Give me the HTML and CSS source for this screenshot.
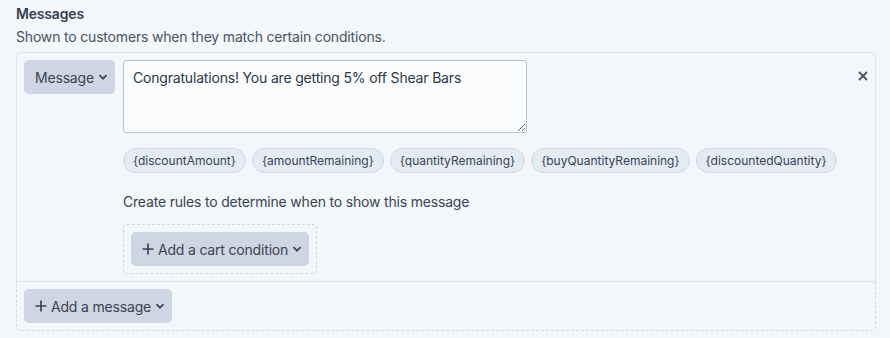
FILE: index.html
```html
<!DOCTYPE html>
<html lang="en">
<head>
    <meta charset="UTF-8">
    <meta name="viewport" content="width=device-width, initial-scale=1.0">
    <title>Messages</title>
    <link rel="stylesheet" href="styles.css">
</head>
<body>
    <div class="section">
        <div class="section-title">Messages</div>
        <div class="section-desc">Shown to customers when they match certain conditions.</div>

        <div class="messages">
            <!-- Mensaje -->
            <div class="message-item">
                <button class="btn">Message
                    <svg class="chevron" viewBox="0 0 10 10"><path d="M1.5 3.2 L5 6.7 L8.5 3.2" /></svg>
                </button>
                <div class="message-body">
                    <textarea class="message-text">Congratulations! You are getting 5% off Shear Bars</textarea>
                    <div class="tags">
                        <span class="tag">{discountAmount}</span>
                        <span class="tag">{amountRemaining}</span>
                        <span class="tag">{quantityRemaining}</span>
                        <span class="tag">{buyQuantityRemaining}</span>
                        <span class="tag">{discountedQuantity}</span>
                    </div>
                    <div class="rules-label">Create rules to determine when to show this message</div>
                    <div class="conditions">
                        <button class="btn">
                            <svg class="plus" viewBox="0 0 12 12"><path d="M6 0.5 V11.5 M0.5 6 H11.5" /></svg>
                            Add a cart condition
                            <svg class="chevron" viewBox="0 0 10 10"><path d="M1.5 3.2 L5 6.7 L8.5 3.2" /></svg>
                        </button>
                    </div>
                </div>
                <button class="remove" title="Remove">
                    <svg viewBox="0 0 10 10"><path d="M1 1 L9 9 M9 1 L1 9" /></svg>
                </button>
            </div>

            <!-- Agregar -->
            <div class="messages-footer">
                <button class="btn">
                    <svg class="plus" viewBox="0 0 12 12"><path d="M6 0.5 V11.5 M0.5 6 H11.5" /></svg>
                    Add a message
                    <svg class="chevron" viewBox="0 0 10 10"><path d="M1.5 3.2 L5 6.7 L8.5 3.2" /></svg>
                </button>
            </div>
        </div>
    </div>
</body>
</html>
```

FILE: styles.css
```css
body {
    font-family: Inter, "Noto Sans", sans-serif;
    font-size: 14px;
    letter-spacing: -0.18px;
    color: #3a4453;
    background-color: #f3f6fa;
    margin: 0;
    padding: 4px 14px 0 16px;
}
.section-title {
    font-weight: 600;
    line-height: 20px;
    color: #353f4e;
}
.section-desc {
    margin-top: 3px;
    line-height: 20px;
    color: #4a5363;
    margin-bottom: 5px;
}
.message-item {
    display: flex;
    align-items: flex-start;
    gap: 8px;
    padding: 7px;
    border: 1px solid #dde3eb;
    border-radius: 5px 5px 0 0;
}
.message-body {
    flex: 1;
}
.btn {
    display: inline-flex;
    align-items: center;
    gap: 4px;
    height: 34px;
    padding: 0 7px 0 11px;
    font-family: inherit;
    font-size: 14px;
    letter-spacing: inherit;
    color: #3a4453;
    background-color: #cdd6e2;
    border: none;
    border-radius: 5px;
    cursor: pointer;
}
.btn .chevron {
    width: 10px;
    height: 10px;
    fill: none;
    stroke: #3a4453;
    stroke-width: 1.7;
}
.btn .plus {
    width: 12px;
    height: 12px;
    fill: none;
    stroke: #3a4453;
    stroke-width: 1.7;
}
.message-text {
    display: block;
    width: 404px;
    height: 73px;
    box-sizing: border-box;
    padding: 8px 9px;
    font-family: inherit;
    font-size: 14px;
    letter-spacing: inherit;
    line-height: 18px;
    color: #2f3846;
    background-color: #fbfcfe;
    border: 1px solid #b6c3d4;
    border-radius: 3px;
}
.tags {
    display: flex;
    gap: 6px;
    margin-top: 15px;
}
.tag {
    height: 23px;
    line-height: 23px;
    padding: 0 9px;
    font-size: 12px;
    letter-spacing: 0;
    color: #3a4453;
    background-color: #e5ebf3;
    border: 1px solid #d0d9e5;
    border-radius: 13px;
}
.rules-label {
    margin-top: 19px;
    line-height: 20px;
}
.conditions {
    display: inline-block;
    margin-top: 12px;
    padding: 7px;
    border: 1px dashed #d3d9e1;
    border-radius: 4px;
}
.remove {
    width: 12px;
    height: 20px;
    margin: 6px -1px 0 0;
    padding: 0;
    display: flex;
    align-items: center;
    justify-content: center;
    background: none;
    border: none;
    cursor: pointer;
}
.remove svg {
    width: 10px;
    height: 10px;
    fill: none;
    stroke: #4a5363;
    stroke-width: 1.8;
}
.messages-footer {
    padding: 7px;
    border: 1px dashed #d3d9e1;
    border-top: none;
    border-radius: 0 0 5px 5px;
}
```
